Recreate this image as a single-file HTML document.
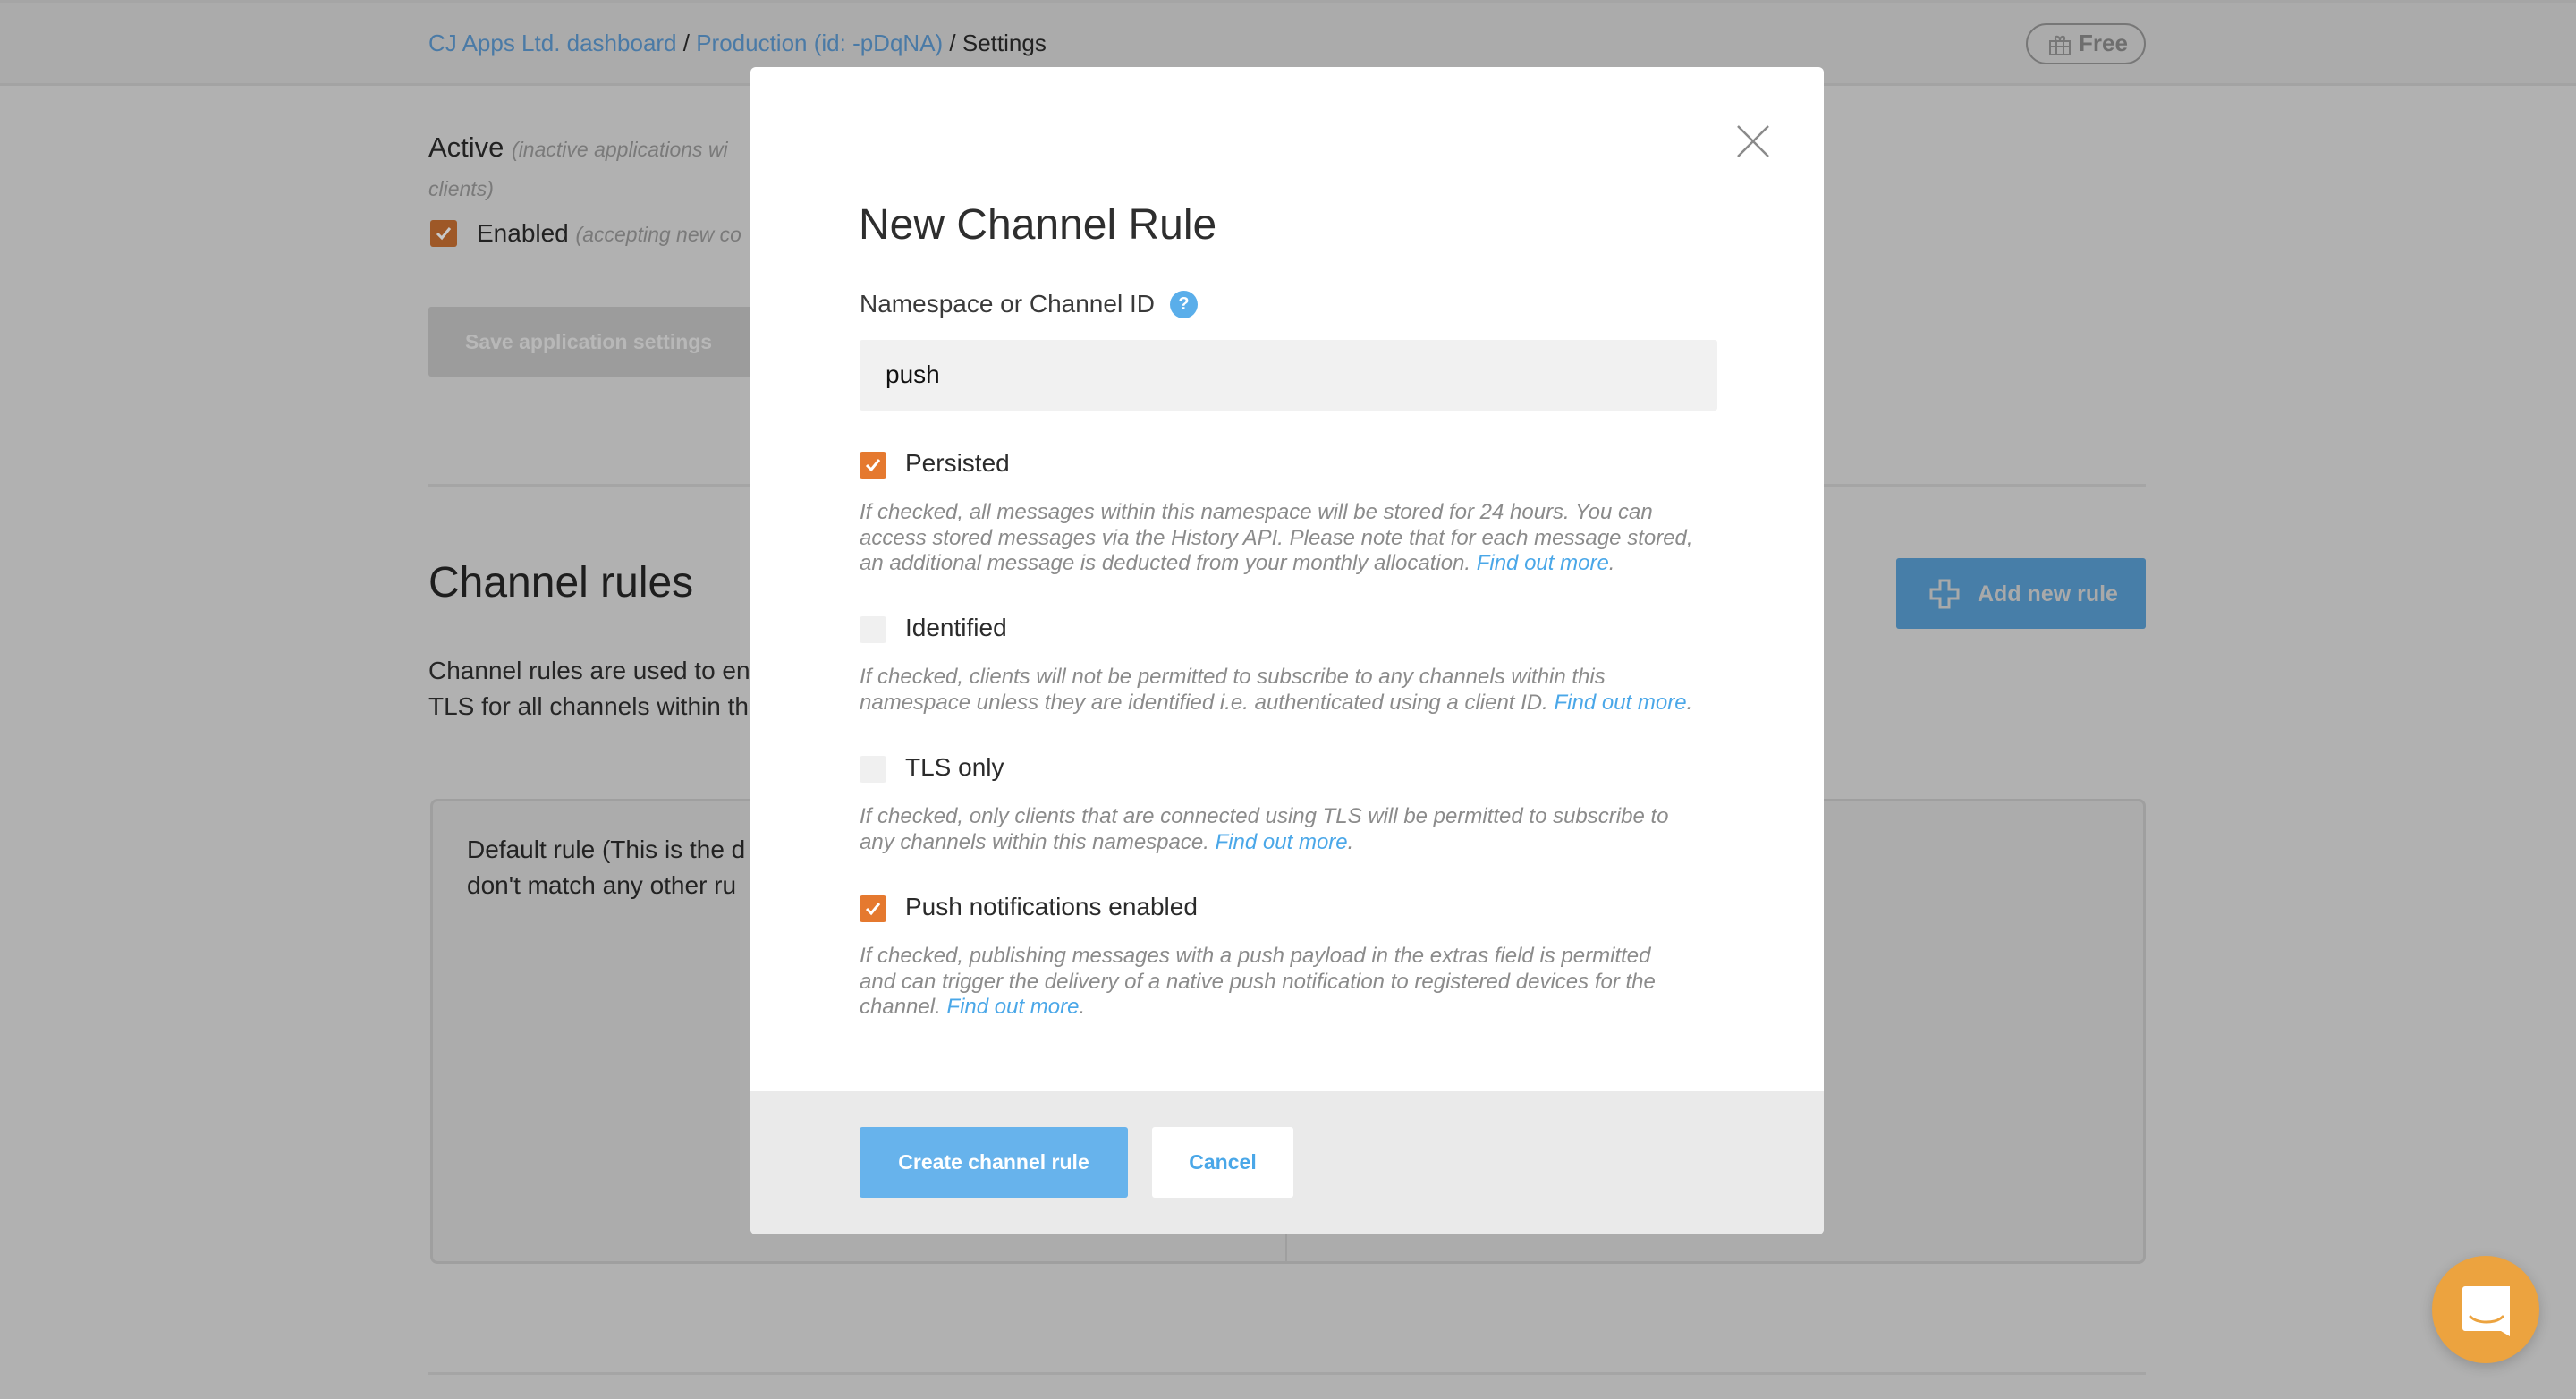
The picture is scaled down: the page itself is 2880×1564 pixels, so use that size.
<!DOCTYPE html>
<html><head><meta charset="utf-8"><style>
*{margin:0;padding:0;box-sizing:border-box}
body{width:2880px;height:1564px;overflow:hidden;background:#b1b1b1;font-family:"Liberation Sans",sans-serif;position:relative}
.a{position:absolute;white-space:nowrap}
.hdr{position:absolute;left:0;top:0;width:2880px;height:96px;background:#ababab;border-bottom:3px solid #a3a3a3;border-top:3px solid #a5a5a5}
.lk{color:#4a7aa6}
.it{font-style:italic;color:#8a8a8a}
.cb{position:absolute;width:30px;height:30px;border-radius:3px;background:#e5792f}
.cb svg{position:absolute;left:5px;top:6px}
.cbe{background:#f0f0f0}
.desc{position:absolute;left:961px;font-size:24px;line-height:28.5px;font-style:italic;color:#8b8b8b;white-space:nowrap}
.desc b{font-weight:normal;color:#4aa7e8}
.lbl{position:absolute;left:1012px;font-size:28px;color:#2b2b2b;line-height:40px}
</style></head><body>
<div class="hdr"></div>
<div class="a" style="left:479px;top:32px;font-size:26px;line-height:32px;color:#222"><span class="lk">CJ Apps Ltd. dashboard</span> / <span class="lk">Production (id: -pDqNA)</span> / Settings</div>
<div class="a" style="left:2265px;top:26px;width:134px;height:46px;border:2px solid #777;border-radius:23px"></div>
<svg class="a" style="left:2290px;top:38px" width="26" height="24" viewBox="0 0 26 24"><g fill="none" stroke="#777" stroke-width="2"><rect x="2" y="8" width="22" height="15"/><path d="M2 14h22M9 8v15M17 8v15M9 8c-4-6 4-8 4 0M17 8c4-6-4-8-4 0"/></g></svg>
<div class="a" style="left:2324px;top:32px;font-size:26px;line-height:32px;color:#6e6e6e;font-weight:bold">Free</div>

<div class="a" style="left:479px;top:145px;font-size:31px;line-height:40px;color:#222">Active <span class="it" style="font-size:23px;color:#7a7a7a">(inactive applications wi</span></div>
<div class="a it" style="left:479px;top:196px;font-size:23px;line-height:30px;color:#7a7a7a">clients)</div>
<div class="cb" style="left:481px;top:246px;background:#9e5827"><svg width="20" height="18" viewBox="0 0 20 18"><path d="M3 9l5 5 9-11" fill="none" stroke="#c9c9c9" stroke-width="3"/></svg></div>
<div class="a" style="left:533px;top:243px;font-size:28px;line-height:36px;color:#222">Enabled <span class="it" style="font-size:23px;color:#7a7a7a">(accepting new co</span></div>
<div class="a" style="left:479px;top:343px;width:380px;height:78px;background:#9c9c9c;border-radius:3px"></div>
<div class="a" style="left:520px;top:364px;font-size:23px;line-height:36px;color:#b8b8b8;font-weight:bold">Save application settings</div>
<div class="a" style="left:479px;top:541px;width:1920px;height:3px;background:#a5a5a5"></div>
<div class="a" style="left:479px;top:624px;font-size:48px;line-height:56px;color:#1e1e1e">Channel rules</div>
<div class="a" style="left:479px;top:730px;font-size:28px;line-height:40px;color:#262626">Channel rules are used to en<br>TLS for all channels within th</div>
<div class="a" style="left:2120px;top:624px;width:279px;height:79px;background:#477ea8;border-radius:3px"></div>
<svg class="a" style="left:2157px;top:647px" width="34" height="34" viewBox="0 0 34 34"><path d="M12 2h10v10h10v10H22v10H12V22H2V12h10z" fill="none" stroke="#a9a9a9" stroke-width="3"/></svg>
<div class="a" style="left:2211px;top:647px;font-size:25px;line-height:34px;color:#a9a9a9;font-weight:bold">Add new rule</div>
<div class="a" style="left:481px;top:893px;width:1918px;height:520px;background:#acacac;border:3px solid #9f9f9f;border-radius:8px"></div>
<div class="a" style="left:1437px;top:1380px;width:2px;height:32px;background:#9f9f9f"></div>
<div class="a" style="left:522px;top:930px;font-size:28px;line-height:40px;color:#222">Default rule (This is the d<br>don't match any other ru</div>
<div class="a" style="left:479px;top:1534px;width:1920px;height:3px;background:#a5a5a5"></div>
<div class="a" style="left:2719px;top:1404px;width:120px;height:120px;border-radius:50%;background:#eca33f;box-shadow:0 4px 14px rgba(0,0,0,.18)"></div>
<svg class="a" style="left:2750px;top:1436px" width="60" height="58" viewBox="0 0 60 58"><path d="M6 2h50v56l-10-6H6a3 3 0 0 1-3-3V5a3 3 0 0 1 3-3z" fill="#fff"/><path d="M12 36c8 8 28 8 36 0" fill="none" stroke="#eca33f" stroke-width="3" stroke-linecap="round"/></svg>

<div class="a" style="left:839px;top:75px;width:1200px;height:1305px;background:#fff;border-radius:6px;overflow:hidden">
  <div style="position:absolute;left:0;top:1145px;width:1200px;height:160px;background:#eaeaea"></div>
</div>
<svg class="a" style="left:1940px;top:138px" width="40" height="40" viewBox="0 0 40 40"><path d="M3 3l34 34M37 3L3 37" stroke="#8a8a8a" stroke-width="2.5"/></svg>
<div class="a" style="left:960px;top:222px;font-size:48px;line-height:60px;color:#2e2e2e">New Channel Rule</div>
<div class="a" style="left:961px;top:322px;font-size:28px;line-height:36px;color:#3a3a3a">Namespace or Channel ID</div>
<div class="a" style="left:1308px;top:325px;width:31px;height:31px;border-radius:50%;background:#5aaeea;color:#fff;font-weight:bold;font-size:20px;line-height:31px;text-align:center">?</div>
<div class="a" style="left:961px;top:380px;width:959px;height:79px;background:#f1f1f1;border-radius:3px"></div>
<div class="a" style="left:990px;top:400px;font-size:28px;line-height:38px;color:#111">push</div>

<div class="cb" style="left:961px;top:505px"><svg width="20" height="18" viewBox="0 0 20 18"><path d="M3 9l5 5 9-11" fill="none" stroke="#fff" stroke-width="3"/></svg></div>
<div class="lbl" style="top:498px">Persisted</div>
<div class="desc" style="top:559px">If checked, all messages within this namespace will be stored for 24 hours. You can<br>access stored messages via the History API. Please note that for each message stored,<br>an additional message is deducted from your monthly allocation. <b>Find out more</b>.</div>

<div class="cb cbe" style="left:961px;top:689px"></div>
<div class="lbl" style="top:682px">Identified</div>
<div class="desc" style="top:743px">If checked, clients will not be permitted to subscribe to any channels within this<br>namespace unless they are identified i.e. authenticated using a client ID. <b>Find out more</b>.</div>

<div class="cb cbe" style="left:961px;top:845px"></div>
<div class="lbl" style="top:838px">TLS only</div>
<div class="desc" style="top:899px">If checked, only clients that are connected using TLS will be permitted to subscribe to<br>any channels within this namespace. <b>Find out more</b>.</div>

<div class="cb" style="left:961px;top:1001px"><svg width="20" height="18" viewBox="0 0 20 18"><path d="M3 9l5 5 9-11" fill="none" stroke="#fff" stroke-width="3"/></svg></div>
<div class="lbl" style="top:994px">Push notifications enabled</div>
<div class="desc" style="top:1055px">If checked, publishing messages with a push payload in the extras field is permitted<br>and can trigger the delivery of a native push notification to registered devices for the<br>channel. <b>Find out more</b>.</div>

<div class="a" style="left:961px;top:1260px;width:300px;height:79px;background:#67b3ec;border-radius:3px;color:#fff;font-weight:bold;font-size:23px;line-height:79px;text-align:center">Create channel rule</div>
<div class="a" style="left:1288px;top:1260px;width:158px;height:79px;background:#fff;border-radius:3px;color:#4aa7e8;font-weight:bold;font-size:23px;line-height:79px;text-align:center">Cancel</div>
</body></html>
